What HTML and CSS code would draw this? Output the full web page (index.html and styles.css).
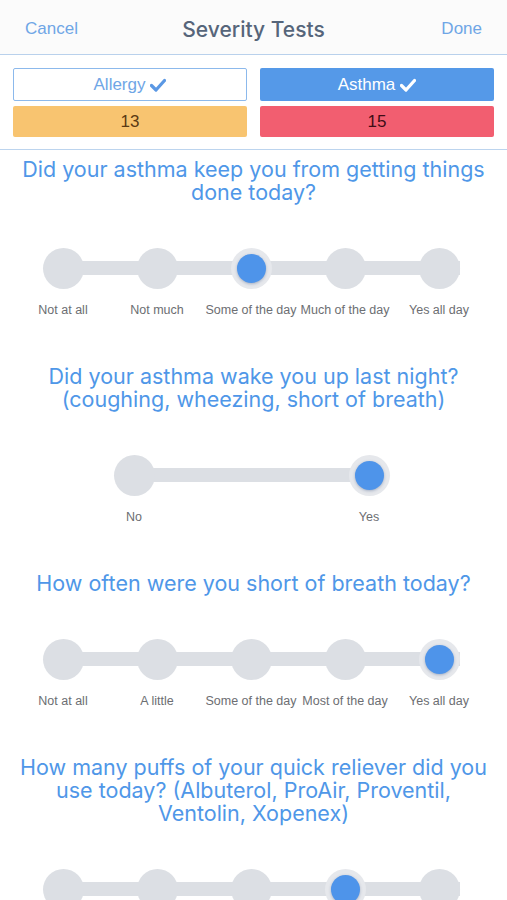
FILE: index.html
```html
<!DOCTYPE html>
<html>
<head>
<meta charset="utf-8">
<link rel="stylesheet" href="styles.css">
</head>
<body>
<div class="app">
  <header class="nav">
    <span class="nav-btn nav-left">Cancel</span>
    <span class="nav-title">Severity Tests</span>
    <span class="nav-btn nav-right">Done</span>
  </header>
  <section class="tabs">
    <div class="tab tab-outline">Allergy <svg class="check" viewBox="0 0 16 14"><path d="M1.5 7.5 L6 12 L14.5 2.5" /></svg></div>
    <div class="tab tab-filled">Asthma <svg class="check" viewBox="0 0 16 14"><path d="M1.5 7.5 L6 12 L14.5 2.5" /></svg></div>
    <div class="score score-orange">13</div>
    <div class="score score-red">15</div>
  </section>

  <section class="question first">
    <h2 class="q-text">Did your asthma keep you from getting things<br>done today?</h2>
    <div class="slider five">
      <div class="stop"><span class="dot"></span><span class="label">Not at all</span></div>
      <div class="stop"><span class="dot"></span><span class="label">Not much</span></div>
      <div class="stop"><span class="dot on"></span><span class="label">Some of the day</span></div>
      <div class="stop"><span class="dot"></span><span class="label">Much of the day</span></div>
      <div class="stop"><span class="dot"></span><span class="label">Yes all day</span></div>
    </div>
  </section>

  <section class="question">
    <h2 class="q-text">Did your asthma wake you up last night?<br>(coughing, wheezing, short of breath)</h2>
    <div class="slider two">
      <div class="stop"><span class="dot"></span><span class="label">No</span></div>
      <div class="stop"><span class="dot on"></span><span class="label">Yes</span></div>
    </div>
  </section>

  <section class="question">
    <h2 class="q-text">How often were you short of breath today?</h2>
    <div class="slider five">
      <div class="stop"><span class="dot"></span><span class="label">Not at all</span></div>
      <div class="stop"><span class="dot"></span><span class="label">A little</span></div>
      <div class="stop"><span class="dot"></span><span class="label">Some of the day</span></div>
      <div class="stop"><span class="dot"></span><span class="label">Most of the day</span></div>
      <div class="stop"><span class="dot on"></span><span class="label">Yes all day</span></div>
    </div>
  </section>

  <section class="question">
    <h2 class="q-text">How many puffs of your quick reliever did you<br>use today? (Albuterol, ProAir, Proventil,<br>Ventolin, Xopenex)</h2>
    <div class="slider five">
      <div class="stop"><span class="dot"></span></div>
      <div class="stop"><span class="dot"></span></div>
      <div class="stop"><span class="dot"></span></div>
      <div class="stop"><span class="dot on"></span></div>
      <div class="stop"><span class="dot"></span></div>
    </div>
  </section>
</div>
</body>
</html>
```

FILE: styles.css
```css
* { box-sizing: border-box; }
html, body { margin: 0; padding: 0; background: #ffffff; }
body { font-family: "Liberation Sans", Arial, sans-serif; overflow: hidden; }
.app { width: 507px; height: 900px; overflow: hidden; }

.nav {
  height: 55px;
  background: #fbfbfb;
  border-bottom: 1px solid #b9d1ec;
  display: grid;
  grid-template-columns: 1fr auto 1fr;
  align-items: center;
  padding: 3px 25px 0 25px;
}
.nav-btn { color: #6fa6e6; font-size: 17px; }
.nav-right { justify-self: end; }
.nav-title { font-family: Inter, "Liberation Sans", sans-serif; color: #56657a; font-size: 21px; font-weight: 500; padding-top: 2px; }

.tabs {
  display: grid;
  grid-template-columns: 234px 234px;
  column-gap: 13px;
  row-gap: 5px;
  padding: 13px 13px 12px 13px;
  border-bottom: 1px solid #bcd4ee;
}
.tab {
  height: 33px;
  border-radius: 2px;
  display: flex;
  align-items: center;
  justify-content: center;
  font-size: 17px;
  gap: 5px;
}
.tab-outline { border: 1.5px solid #8cb9ec; color: #6fa6e6; background: #fff; }
.tab-filled { background: #5599e8; color: #ffffff; }
.check { width: 16px; height: 14px; fill: none; stroke: currentColor; stroke-width: 3.2; stroke-linecap: round; stroke-linejoin: round; margin-top: 1px; }
.tab-outline .check { stroke: #5b98e4; }
.score {
  height: 31px;
  border-radius: 2px;
  display: flex;
  align-items: center;
  justify-content: center;
  font-size: 17px;
}
.score-orange { background: #f8c470; color: #5a3a14; }
.score-red { background: #f25e70; color: #3f0d16; }

.question { padding-top: 48px; }
.question.first { padding-top: 8px; }
.q-text {
  margin: 0;
  padding: 0 4px;
  text-align: center;
  color: #4f97e8;
  font-family: Inter, "Liberation Sans", sans-serif;
  font-weight: normal;
  font-size: 21.5px;
  line-height: 23px;
  white-space: nowrap;
}

.slider {
  position: relative;
  display: grid;
  margin-top: 44px;
}
.slider.five { grid-template-columns: repeat(5, 94px); margin-left: 16px; }
.slider.two { grid-template-columns: 94px 94px; column-gap: 141px; margin-left: 87px; }
.slider::before {
  content: "";
  position: absolute;
  top: 13px;
  height: 14px;
  left: 47px;
  right: 47px;
  background: #dcdfe4;
}
.slider.two::before { left: 47px; right: auto; width: 235px; }
.stop {
  position: relative;
  display: flex;
  flex-direction: column;
  align-items: center;
}
.dot {
  width: 41px;
  height: 41px;
  border-radius: 50%;
  background: #dcdfe4;
  display: flex;
  align-items: center;
  justify-content: center;
}
.dot.on { background: #e6e8ec; }
.dot.on::after {
  content: "";
  width: 29px;
  height: 29px;
  border-radius: 50%;
  background: #4e94ea;
  box-shadow: 0 1px 3px rgba(40, 70, 120, 0.35);
}
.label {
  margin-top: 14px;
  font-size: 12.5px;
  line-height: 14px;
  color: #6c6e72;
  white-space: nowrap;
}
```
